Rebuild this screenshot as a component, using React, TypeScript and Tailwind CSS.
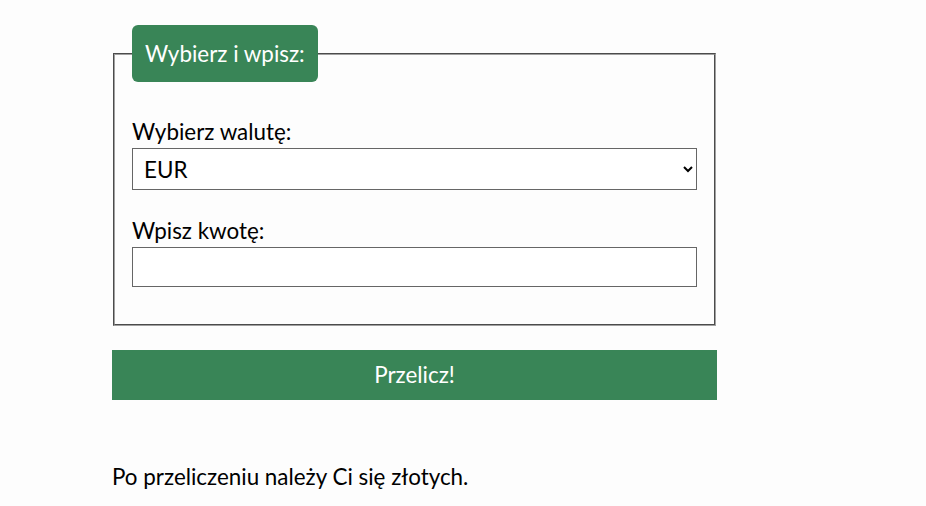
import React, { useState } from 'react';

export default function App() {
  const [currency, setCurrency] = useState('EUR');
  const [amount, setAmount] = useState('');

  return (
    <div className="min-h-screen bg-[#fdfdfd] font-['Lato','Liberation_Sans',sans-serif] text-[22.4px] text-black">
      <div className="w-[605px] ml-[112px] pt-[25px]">
        <fieldset className="ml-px w-[602px] border-2 border-[#a0a0a0] [border-style:groove] px-[17px] pb-[37px]">
          <legend className="h-[57px] rounded-md bg-[#398557] px-[13px] leading-[57px] text-white">
            Wybierz i wpisz:
          </legend>

          <label htmlFor="currency" className="mt-[34px] block leading-[32px]">
            Wybierz walutę:
          </label>
          <select
            id="currency"
            value={currency}
            onChange={(e) => setCurrency(e.target.value)}
            className="block h-[42px] w-[565px] border border-[#666] bg-white pl-[7px] text-[22.4px]"
          >
            <option>EUR</option>
            <option>USD</option>
            <option>GBP</option>
            <option>CHF</option>
          </select>

          <label htmlFor="amount" className="mt-[25px] block leading-[32px]">
            Wpisz kwotę:
          </label>
          <input
            id="amount"
            type="text"
            value={amount}
            onChange={(e) => setAmount(e.target.value)}
            className="block h-[40px] w-[565px] border border-[#666] bg-white px-[11px] text-[22.4px]"
          />
        </fieldset>

        <button className="mt-[24px] block h-[50px] w-[605px] bg-[#398557] text-white">
          Przelicz!
        </button>

        <p className="mt-[61px] leading-[32px]">Po przeliczeniu należy Ci się złotych.</p>
      </div>
    </div>
  );
}
